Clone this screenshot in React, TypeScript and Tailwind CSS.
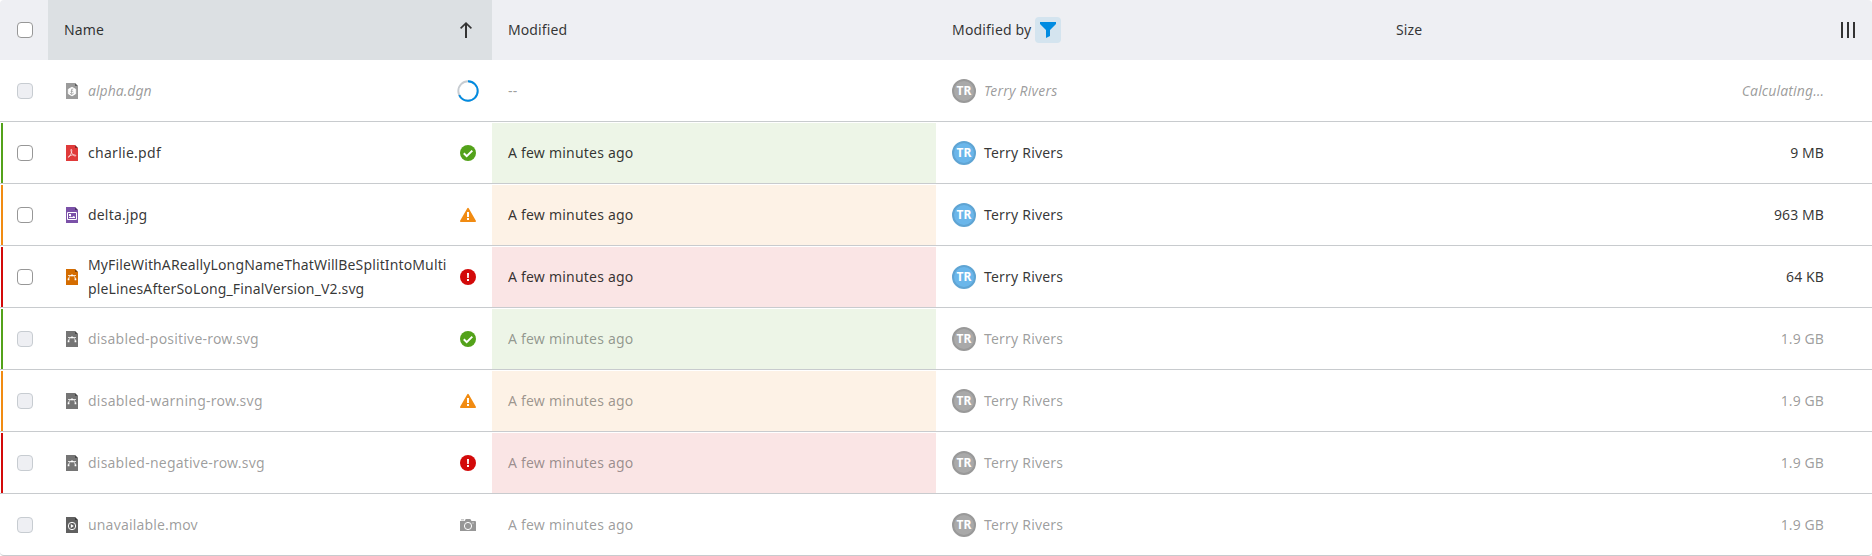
import React from 'react';

type Status = 'positive' | 'warning' | 'negative';
type FileKind = 'dgn' | 'pdf' | 'image' | 'vector' | 'movie';
type Indicator = Status | 'loading' | 'snapshot';

interface Row {
  name: string;
  kind: FileKind;
  iconColor: string;
  indicator: Indicator;
  status?: Status;
  modified: string;
  size: string;
  tracking: string;
  disabled?: boolean;
  loading?: boolean;
}

const rows: Row[] = [
  { name: 'alpha.dgn', kind: 'dgn', iconColor: '#9b9b9b', indicator: 'loading', modified: '--', size: 'Calculating…', tracking: 'tracking-normal', disabled: true, loading: true },
  { name: 'charlie.pdf', kind: 'pdf', iconColor: '#e03a3a', indicator: 'positive', status: 'positive', modified: 'A few minutes ago', size: '9 MB', tracking: 'tracking-[0.28px]' },
  { name: 'delta.jpg', kind: 'image', iconColor: '#7b51a8', indicator: 'warning', status: 'warning', modified: 'A few minutes ago', size: '963 MB', tracking: 'tracking-[0.18px]' },
  { name: 'MyFileWithAReallyLongNameThatWillBeSplitIntoMultipleLinesAfterSoLong_FinalVersion_V2.svg', kind: 'vector', iconColor: '#d46c00', indicator: 'negative', status: 'negative', modified: 'A few minutes ago', size: '64 KB', tracking: 'tracking-[0.13px]' },
  { name: 'disabled-positive-row.svg', kind: 'vector', iconColor: '#757575', indicator: 'positive', status: 'positive', modified: 'A few minutes ago', size: '1.9 GB', tracking: 'tracking-[0.2px]', disabled: true },
  { name: 'disabled-warning-row.svg', kind: 'vector', iconColor: '#757575', indicator: 'warning', status: 'warning', modified: 'A few minutes ago', size: '1.9 GB', tracking: 'tracking-[0.24px]', disabled: true },
  { name: 'disabled-negative-row.svg', kind: 'vector', iconColor: '#757575', indicator: 'negative', status: 'negative', modified: 'A few minutes ago', size: '1.9 GB', tracking: 'tracking-[0.21px]', disabled: true },
  { name: 'unavailable.mov', kind: 'movie', iconColor: '#606060', indicator: 'snapshot', modified: 'A few minutes ago', size: '1.9 GB', tracking: 'tracking-[0.16px]', disabled: true },
];

const barColor: Record<Status, string> = {
  positive: 'bg-[#53a21a]',
  warning: 'bg-[#f18b12]',
  negative: 'bg-[#d30a0a]',
};

const tint: Record<Status, string> = {
  positive: 'bg-[#edf5e7]',
  warning: 'bg-[#fdf2e6]',
  negative: 'bg-[#fae5e5]',
};

function FileIcon({ kind, color }: { kind: FileKind; color: string }) {
  return (
    <svg viewBox="0 0 16 16" className="size-4 shrink-0">
      <path d="M2 0h9l3 3v13H2z" fill={color} />
      <path d="M11 0v3h3z" fill="#000" fillOpacity=".4" />
      {kind === 'dgn' && (
        <>
          <path d="M8 4.200l3.700 2.100v4.400L8 12.900l-3.700-2.200V6.300z" fill="#fff" stroke="#fff" strokeWidth=".8" strokeLinejoin="round" />
          <path d="M9.200 6.200H7.600v5.200M6.600 8.300h2.600M5.800 10l1.800 1.500L9.800 10" fill="none" stroke={color} strokeWidth=".8" />
        </>
      )}
      {kind === 'pdf' && (
        <path
          d="M7.200 4.300c.8 0 .7 2 .1 3.600C6.600 9.700 5.200 12.500 4.400 12.300c-.9-.4 1.800-2 3.700-2.300 1.800-.3 3.900-.1 3.700.7-.3 1-2.300-.2-3.300-1.600C7.400 7.700 6.400 4.300 7.200 4.300z"
          fill="none"
          stroke="#fff"
          strokeWidth=".7"
        />
      )}
      {kind === 'image' && (
        <>
          <path d="M3.500 5.500h9v7h-9z" fill="none" stroke="#fff" />
          <path d="M5 7h2v2H5zM5 11V10.300l1.500-.8 1.500.7 1.800-1.200 1.200 1V11z" fill="#fff" />
        </>
      )}
      {kind === 'vector' && (
        <>
          <path d="M4.500 10.500C4.600 8.400 5.700 6.500 8 6.500s3.400 1.900 3.500 4M4 6.500h8" fill="none" stroke="#fff" strokeWidth=".8" />
          <path d="M7.100 5.400h1.800v1.800H7.100zM3.700 9.500h1.700v1.700H3.700zM10.600 9.500h1.700v1.700h-1.700z" fill="#fff" />
        </>
      )}
      {kind === 'movie' && (
        <>
          <circle cx="8" cy="9" r="3.700" fill="none" stroke="#fff" />
          <path d="M6.800 7l3 2-3 2z" fill="#fff" />
        </>
      )}
    </svg>
  );
}

function IndicatorIcon({ type }: { type: Indicator }) {
  if (type === 'loading') {
    return (
      <svg viewBox="0 0 22 22" className="-mx-[3px] size-[22px] shrink-0">
        <circle cx="11" cy="11" r="9.700" fill="none" stroke="#c7ccd1" strokeWidth="1.900" />
        <circle cx="11" cy="11" r="9.700" fill="none" stroke="#008be1" strokeWidth="1.900" pathLength="100" strokeDasharray="68 100" transform="rotate(-90 11 11)" />
      </svg>
    );
  }
  return (
    <svg viewBox="0 0 16 16" className="size-4 shrink-0">
      {type === 'positive' && (
        <>
          <circle cx="8" cy="8" r="8" fill="#53a21a" />
          <path d="M3.800 8.300l2.900 2.900 5.600-5.600" fill="none" stroke="#fff" strokeWidth="2" />
        </>
      )}
      {type === 'warning' && (
        <>
          <path d="M8 .8c.3 0 .5.200.7.500l7.200 12.500c.200.600 0 1.200-.7 1.200H.8c-.7 0-.9-.600-.7-1.200L7.300 1.300c.200-.300.400-.500.700-.500z" fill="#f18b12" />
          <path d="M7 5h2v5H7zM7 11h2v2H7z" fill="#fff" />
        </>
      )}
      {type === 'negative' && (
        <>
          <circle cx="8" cy="8" r="8" fill="#d30a0a" />
          <path d="M7 4h2l-.2 5H7.200zM7 10h2v2H7z" fill="#fff" />
        </>
      )}
      {type === 'snapshot' && (
        <>
          <path d="M1 2.400h3v.8H1zM5 3.500L5.700 2h4.600L11.500 4H15a1 1 0 0 1 1 1v9H0V4h4.700z" fill="#979797" />
          <circle cx="8" cy="9" r="3.600" fill="none" stroke="#fff" />
          <path d="M12.500 5.500h1v1h-1z" fill="#fff" />
        </>
      )}
    </svg>
  );
}

function Checkbox({ disabled }: { disabled?: boolean }) {
  return (
    <span
      role="checkbox"
      aria-checked="false"
      className={`ml-[17px] size-4 rounded-[4px] border ${disabled ? 'border-[#c7ccd1] bg-[#eeeff3]' : 'border-[#979797] bg-white'}`}
    />
  );
}

const columns = 'grid grid-cols-[48px_444px_444px_444px_444px_48px]';

function TableRow({ row }: { row: Row }) {
  const text = row.disabled ? 'text-black/40' : 'text-black/80';
  const italic = row.loading ? 'italic' : '';
  return (
    <div role="row" className={`${columns} h-[62px] border-y border-t-transparent border-b-[#c8cbce] bg-clip-padding last:rounded-b-[4px] ${text}`}>
      <div className="flex items-center">
        <span className={`ml-px h-full w-[2px] ${row.status ? barColor[row.status] : ''}`} />
        <span className="-ml-[3px] flex">
          <Checkbox disabled={row.disabled} />
        </span>
      </div>
      <div className="flex items-center px-4">
        <FileIcon kind={row.kind} color={row.iconColor} />
        <span className={`mr-2 ml-2 min-w-0 flex-1 leading-6 break-all ${row.tracking} ${italic}`}>{row.name}</span>
        <IndicatorIcon type={row.indicator} />
      </div>
      <div className={`flex items-center px-4 tracking-[0.21px] ${row.status ? tint[row.status] : ''}`}>{row.modified}</div>
      <div className="flex items-center gap-2 px-4">
        <span
          className={`flex size-6 items-center justify-center rounded-full border-2 text-[12px] leading-none font-bold text-white ${
            row.disabled ? 'border-[#999999] bg-[#a9a9a9]' : 'border-[#5fa4d3] bg-[#6ab6ea]'
          }`}
        >
          TR
        </span>
        <span className={`tracking-[0.2px] ${italic}`}>Terry Rivers</span>
      </div>
      <div className={`flex items-center justify-end tracking-[0.1px] ${italic}`}>{row.size}</div>
      <div />
    </div>
  );
}

export default function App() {
  return (
    <div role="table" className="w-[1872px] bg-white font-['Noto_Sans',sans-serif] text-[14px] leading-6 text-black/80">
      <div role="row" className={`${columns} h-[60px] overflow-hidden rounded-t-[4px] bg-[#eeeff3] tracking-[0.1px]`}>
        <div className="flex items-center">
          <Checkbox />
        </div>
        <div className="flex items-center justify-between bg-[#dce0e3] pr-[18px] pl-4">
          Name
          <svg viewBox="0 0 16 16" className="size-4">
            <path d="M8 16V1.500" fill="none" stroke="#333" strokeWidth="2" />
            <path d="M2.600 6.400L8 1.200l5.400 5.200" fill="none" stroke="#333" strokeWidth="1.600" />
          </svg>
        </div>
        <div className="flex items-center px-4">Modified</div>
        <div className="flex items-center px-4">
          <span className="tracking-[0.18px]">Modified by</span>
          <span className="ml-1 flex size-[26px] items-center justify-center rounded-[4px] bg-[#d4e4ef]">
            <svg viewBox="0 0 16 16" className="size-4">
              <path d="M0 0h16v2l-6 6v6l-4 2V8L0 2z" fill="#008be1" />
            </svg>
          </span>
        </div>
        <div className="flex items-center px-4">Size</div>
        <div className="flex items-center justify-center">
          <svg viewBox="0 0 16 16" className="size-4">
            <path d="M1 0h2v16H1zM7 0h2v16H7zM13 0h2v16h-2z" fill="#333" />
          </svg>
        </div>
      </div>
      <div role="rowgroup">
        {rows.map((row) => (
          <TableRow key={row.name} row={row} />
        ))}
      </div>
    </div>
  );
}
